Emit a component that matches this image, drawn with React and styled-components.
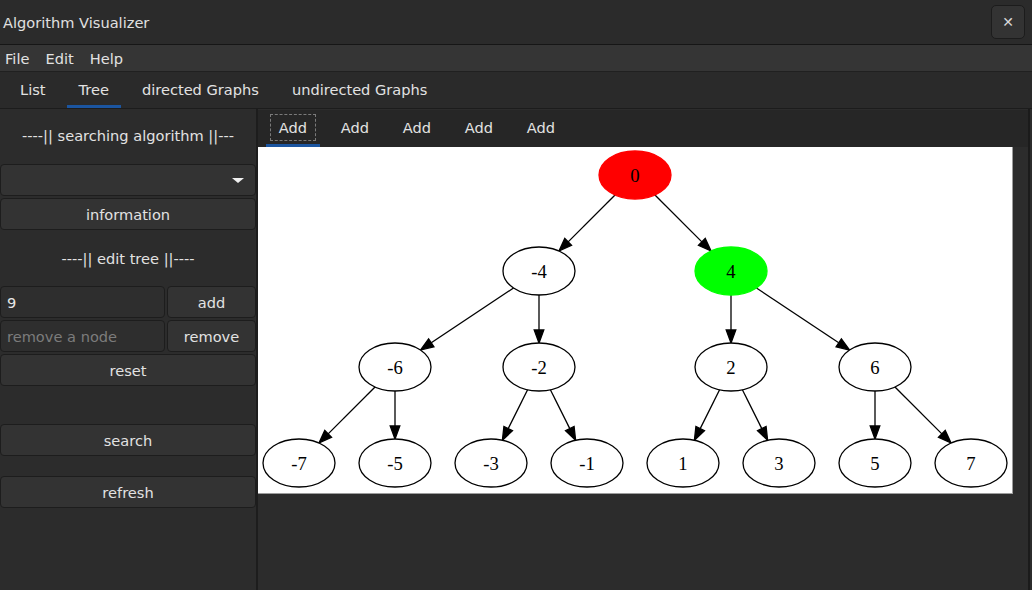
import React from 'react';
import styled, { createGlobalStyle } from 'styled-components';

const GlobalStyle = createGlobalStyle`
  html, body {
    margin: 0;
    padding: 0;
    background: #2c2c2c;
    overflow: hidden;
  }
  body {
    font-family: "DejaVu Sans", "Noto Sans", sans-serif;
    font-size: 14.6px;
    color: #dedede;
  }
`;

const nodes = {
  n0: { label: '0', x: 377, y: 28, fill: '#ff0000', stroke: '#ff0000' },
  nm4: { label: '-4', x: 281, y: 124 },
  n4: { label: '4', x: 473, y: 124, fill: '#00ff00', stroke: '#00ff00' },
  nm6: { label: '-6', x: 137, y: 220 },
  nm2: { label: '-2', x: 281, y: 220 },
  n2: { label: '2', x: 473, y: 220 },
  n6: { label: '6', x: 617, y: 220 },
  nm7: { label: '-7', x: 41, y: 316 },
  nm5: { label: '-5', x: 137, y: 316 },
  nm3: { label: '-3', x: 233, y: 316 },
  nm1: { label: '-1', x: 329, y: 316 },
  n1: { label: '1', x: 425, y: 316 },
  n3: { label: '3', x: 521, y: 316 },
  n5: { label: '5', x: 617, y: 316 },
  n7: { label: '7', x: 713, y: 316 },
};

const edges = [
  ['n0', 'nm4'], ['n0', 'n4'],
  ['nm4', 'nm6'], ['nm4', 'nm2'], ['n4', 'n2'], ['n4', 'n6'],
  ['nm6', 'nm7'], ['nm6', 'nm5'], ['nm2', 'nm3'], ['nm2', 'nm1'],
  ['n2', 'n1'], ['n2', 'n3'], ['n6', 'n5'], ['n6', 'n7'],
];

const RX = 36;
const RY = 24;

// point on the ellipse border in the direction (dx, dy)
function border(node, dx, dy) {
  const t = 1 / Math.sqrt((dx / RX) ** 2 + (dy / RY) ** 2);
  return [node.x + dx * t, node.y + dy * t];
}

function Edge({ from, to }) {
  const a = nodes[from];
  const b = nodes[to];
  const dx = b.x - a.x;
  const dy = b.y - a.y;
  const len = Math.hypot(dx, dy);
  const ux = dx / len;
  const uy = dy / len;
  const [sx, sy] = border(a, dx, dy);
  const [tx, ty] = border(b, -dx, -dy);
  const head = 13;
  const half = 4.8;
  const bx = tx - ux * head;
  const by = ty - uy * head;
  const pts = `${tx},${ty} ${bx - uy * half},${by + ux * half} ${bx + uy * half},${by - ux * half}`;
  return (
    <g>
      <line x1={sx} y1={sy} x2={bx} y2={by} stroke="#000" strokeWidth="1.3" />
      <polygon points={pts} fill="#000" stroke="#000" strokeWidth="1.3" />
    </g>
  );
}

function TreeGraph() {
  return (
    <svg width="754" height="346" viewBox="0 0 754 346">
      {edges.map(([f, t]) => (
        <Edge key={f + t} from={f} to={t} />
      ))}
      {Object.entries(nodes).map(([key, n]) => (
        <g key={key}>
          <ellipse
            cx={n.x}
            cy={n.y}
            rx={RX}
            ry={RY}
            fill={n.fill || '#fff'}
            stroke={n.stroke || '#000'}
            strokeWidth="1.3"
          />
          <text
            x={n.x}
            y={n.y + 6.5}
            textAnchor="middle"
            fontFamily="'Liberation Serif', serif"
            fontSize="18.67"
            fill="#000"
          >
            {n.label}
          </text>
        </g>
      ))}
    </svg>
  );
}

function App() {
  const tabs = ['List', 'Tree', 'directed Graphs', 'undirected Graphs'];
  const innerTabs = ['Add', 'Add', 'Add', 'Add', 'Add'];

  return (
    <Window>
      <GlobalStyle />
      <TitleBar>
        <Title>Algorithm Visualizer</Title>
        <CloseButton>✕</CloseButton>
      </TitleBar>
      <MenuBar>
        <MenuItem>File</MenuItem>
        <MenuItem>Edit</MenuItem>
        <MenuItem>Help</MenuItem>
      </MenuBar>
      <TabBar>
        {tabs.map((t) => (
          <Tab key={t} $active={t === 'Tree'}>
            {t}
          </Tab>
        ))}
      </TabBar>
      <Body>
        <LeftPanel>
          <Heading $h={53}>----|| searching algorithm ||---</Heading>
          <Combo>
            <ComboArrow />
          </Combo>
          <Button>information</Button>
          <Heading $h={52}>----|| edit tree ||----</Heading>
          <Row>
            <Input value="9" readOnly />
            <SmallButton>add</SmallButton>
          </Row>
          <Row>
            <Input placeholder="remove a node" readOnly />
            <SmallButton>remove</SmallButton>
          </Row>
          <Button>reset</Button>
          <Button $mt={36}>search</Button>
          <Button $mt={18}>refresh</Button>
        </LeftPanel>
        <RightPanel>
          <InnerTabBar>
            {innerTabs.map((t, i) => (
              <InnerTab key={i} $active={i === 0}>
                <InnerLabel $focused={i === 0}>{t}</InnerLabel>
              </InnerTab>
            ))}
          </InnerTabBar>
          <CanvasArea>
            <Canvas>
              <TreeGraph />
            </Canvas>
          </CanvasArea>
        </RightPanel>
      </Body>
    </Window>
  );
}

const Window = styled.div`
  width: 1032px;
  height: 590px;
  display: flex;
  flex-direction: column;
  background: #2c2c2c;
  overflow: hidden;
`;

const TitleBar = styled.div`
  height: 44px;
  display: flex;
  align-items: center;
  justify-content: space-between;
  background: #2b2b2b;
  border-bottom: 1px solid #161616;
  padding: 0 7px 0 3px;
  flex-shrink: 0;
`;

const Title = styled.div`
  font-size: 14.6px;
  color: #e0e0e0;
`;

const CloseButton = styled.div`
  width: 32px;
  height: 32px;
  display: flex;
  align-items: center;
  justify-content: center;
  background: #333333;
  border: 1px solid #1c1c1c;
  border-radius: 5px;
  font-size: 14px;
  color: #d8d8d8;
`;

const MenuBar = styled.div`
  height: 26px;
  display: flex;
  align-items: center;
  gap: 16px;
  padding-left: 5px;
  background: #353535;
  border-bottom: 1px solid #202020;
  flex-shrink: 0;
`;

const MenuItem = styled.div`
  color: #e2e2e2;
`;

const TabBar = styled.div`
  height: 36px;
  display: flex;
  padding-left: 8px;
  gap: 9px;
  background: #2a2a2a;
  border-bottom: 1px solid #1c1c1c;
  flex-shrink: 0;
`;

const Tab = styled.div`
  display: flex;
  align-items: center;
  padding: 1px 12px 0;
  color: #e2e2e2;
  border-bottom: 3px solid ${(p) => (p.$active ? '#1b55a0' : 'transparent')};
  box-sizing: border-box;
`;

const Body = styled.div`
  flex: 1;
  display: flex;
  min-height: 0;
`;

const LeftPanel = styled.div`
  width: 256px;
  display: flex;
  flex-direction: column;
  gap: 2px;
  background: #2c2c2c;
  border-right: 2px solid #1d1d1d;
  flex-shrink: 0;
`;

const Heading = styled.div`
  height: ${(p) => p.$h}px;
  display: flex;
  align-items: center;
  justify-content: center;
  color: #e2e2e2;
  flex-shrink: 0;
`;

const Button = styled.div`
  height: 30px;
  margin-top: ${(p) => p.$mt || 0}px;
  display: flex;
  align-items: center;
  justify-content: center;
  background: #333333;
  border: 1px solid #1d1d1d;
  border-radius: 4px;
  color: #e2e2e2;
  flex-shrink: 0;
`;

const Combo = styled(Button)`
  justify-content: flex-end;
  padding-right: 11px;
`;

const ComboArrow = styled.div`
  width: 0;
  height: 0;
  border-left: 6px solid transparent;
  border-right: 6px solid transparent;
  border-top: 5px solid #f0f0f0;
`;

const Row = styled.div`
  display: flex;
  gap: 2px;
  height: 32px;
  flex-shrink: 0;
`;

const Input = styled.input`
  width: 165px;
  box-sizing: border-box;
  height: 32px;
  padding: 0 6px;
  background: #2e2e2e;
  border: 1px solid #1d1d1d;
  border-radius: 4px;
  color: #e6e6e6;
  font-family: "DejaVu Sans", "Noto Sans", sans-serif;
  font-size: 14.6px;
  outline: none;
  &::placeholder {
    color: #7c7c7c;
  }
`;

const SmallButton = styled(Button)`
  flex: 1;
`;

const RightPanel = styled.div`
  flex: 1;
  display: flex;
  flex-direction: column;
  border-right: 2px solid #1b1b1b;
  margin-right: 2px;
  min-width: 0;
`;

const InnerTabBar = styled.div`
  height: 37px;
  display: flex;
  padding-left: 4px;
  background: #262626;
  margin-top: 1px;
  flex-shrink: 0;
`;

const InnerTab = styled.div`
  width: 62px;
  position: relative;
  display: flex;
  align-items: center;
  justify-content: center;
  &::after {
    content: '';
    position: absolute;
    left: 4px;
    right: 4px;
    bottom: 0;
    height: 3px;
    background: ${(p) => (p.$active ? '#1b55a0' : 'transparent')};
  }
`;

const InnerLabel = styled.div`
  padding: 4px 8px;
  margin-top: -2px;
  border: 1px dashed ${(p) => (p.$focused ? '#7a7a7a' : 'transparent')};
  color: #e2e2e2;
`;

const CanvasArea = styled.div`
  flex: 1;
  background: #2c2c2c;
`;

const Canvas = styled.div`
  width: 754px;
  height: 346px;
  background: #ffffff;
  border-right: 1px solid #9c9c9c;
  border-bottom: 1px solid #9c9c9c;
  svg {
    display: block;
  }
`;

export default App;
